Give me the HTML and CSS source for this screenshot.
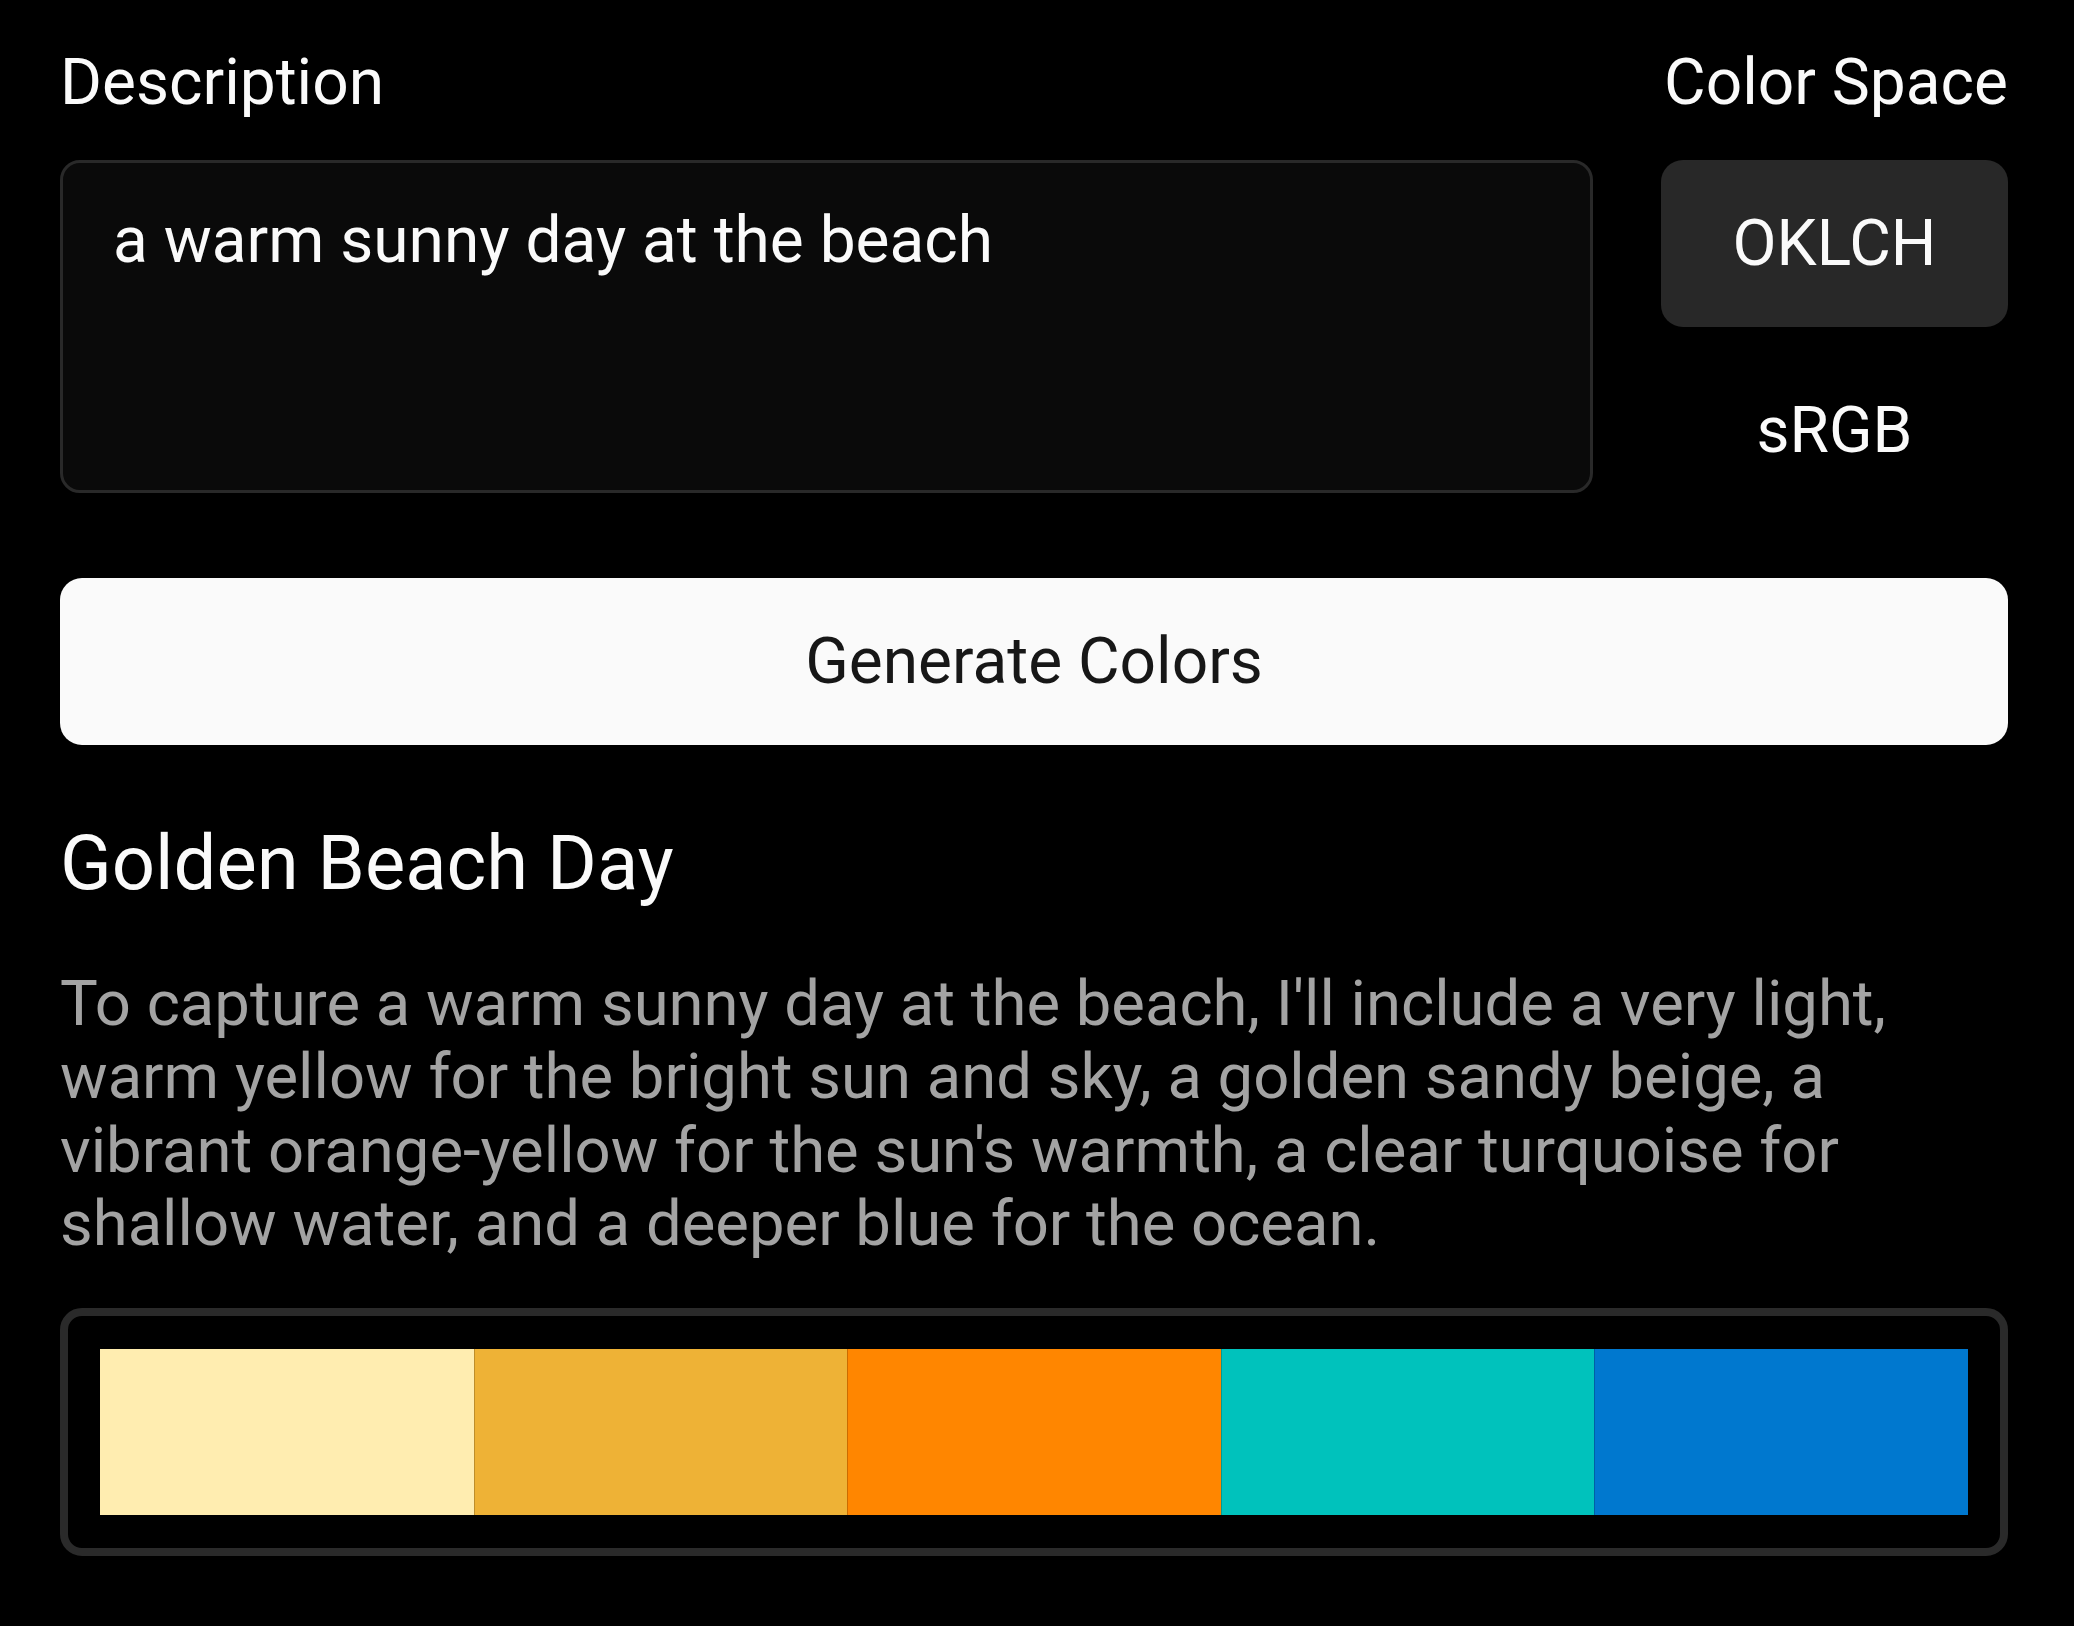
FILE: index.html
```html
<!DOCTYPE html>
<html lang="en">
<head>
    <meta charset="UTF-8">
    <meta name="viewport" content="width=device-width, initial-scale=1.0">
    <title>Palette Generator</title>
    <link rel="stylesheet" href="styles.css">
</head>
<body>

    <main class="app">
        <!-- Prompt + color space -->
        <section class="form-row">
            <div class="field">
                <label class="field-label" for="description">Description</label>
                <textarea id="description" class="desc-input" spellcheck="false">a warm sunny day at the beach</textarea>
            </div>
            <div class="field field-space">
                <span class="field-label">Color Space</span>
                <div class="space-options">
                    <button class="space-option active">OKLCH</button>
                    <button class="space-option">sRGB</button>
                </div>
            </div>
        </section>

        <button class="generate-btn">Generate Colors</button>

        <!-- Result -->
        <h2 class="palette-title">Golden Beach Day</h2>
        <p class="palette-desc">To capture a warm sunny day at the beach, I'll include a very light, warm yellow for the bright sun and sky, a golden sandy beige, a vibrant orange-yellow for the sun's warmth, a clear turquoise for shallow water, and a deeper blue for the ocean.</p>

        <div class="palette">
            <div class="swatch" style="background:#ffedb0"></div>
            <div class="swatch" style="background:#eeb236"></div>
            <div class="swatch" style="background:#ff8600"></div>
            <div class="swatch" style="background:#00c2bc"></div>
            <div class="swatch" style="background:#0078cf"></div>
        </div>
    </main>

</body>
</html>
```

FILE: styles.css
```css
/* Reset */
* {
    margin: 0;
    padding: 0;
    box-sizing: border-box;
}

body {
    background: #000;
    color: #fafafa;
    font-family: Roboto, "Noto Sans", sans-serif;
    font-size: 64px;
}

.app {
    padding: 45px 66px 60px 60px;
}

/* Top form row */
.form-row {
    display: grid;
    grid-template-columns: 1fr 347px;
    column-gap: 68px;
    align-items: start;
}

.field {
    display: flex;
    flex-direction: column;
}

.field-label {
    font-size: 64px;
    line-height: 75px;
    margin-bottom: 40px;
    color: #fafafa;
}

.field-space .field-label {
    text-align: right;
}

.desc-input {
    display: block;
    width: 100%;
    height: 333px;
    padding: 40px 50px;
    background: #0a0a0a;
    border: 3px solid #292929;
    border-radius: 20px;
    color: #fafafa;
    font-family: inherit;
    font-size: 64px;
    line-height: 75px;
    resize: none;
    overflow: hidden;
    outline: none;
}

.space-options {
    display: flex;
    flex-direction: column;
    gap: 20px;
}

.space-option {
    height: 167px;
    border: none;
    border-radius: 22px;
    background: transparent;
    color: #fafafa;
    font-family: inherit;
    font-size: 64px;
    cursor: pointer;
}

.space-option.active {
    background: #282828;
}

/* Generate button */
.generate-btn {
    display: block;
    width: 100%;
    height: 167px;
    margin-top: 64px;
    border: none;
    border-radius: 22px;
    background: #fafafa;
    color: #171717;
    font-family: inherit;
    font-size: 64px;
    cursor: pointer;
}

/* Result */
.palette-title {
    margin-top: 73px;
    font-size: 76px;
    font-weight: 400;
    line-height: 90px;
}

.palette-desc {
    margin-top: 59px;
    font-size: 63.4px;
    line-height: 73.3px;
    color: #a3a3a3;
}

.palette {
    display: flex;
    margin-top: 48px;
    padding: 33px 32px;
    border: 8px solid #2a2a2a;
    border-radius: 22px;
}

.swatch {
    flex: 1;
    height: 166px;
}

.swatch + .swatch {
    box-shadow: inset 1px 0 0 rgba(0, 0, 0, 0.2);
}
```
